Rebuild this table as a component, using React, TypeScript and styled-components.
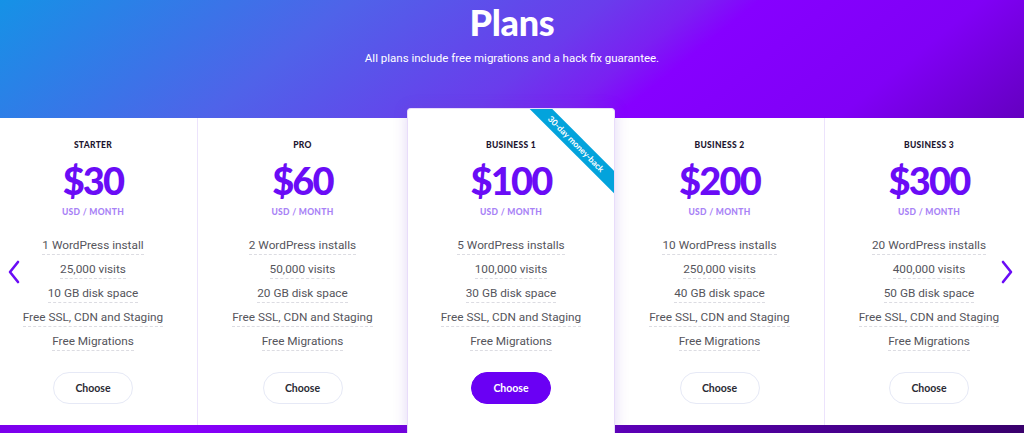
import React from "react";
import styled, { createGlobalStyle } from "styled-components";

const GlobalStyle = createGlobalStyle`
  html, body { margin: 0; padding: 0; background: #ffffff; overflow: hidden; }
  body { font-family: "Roboto", "Liberation Sans", sans-serif; }
  * { box-sizing: border-box; }
`;

const Page = styled.div`
  width: 1024px;
  height: 433px;
  position: relative;
  overflow: hidden;
  background: #ffffff;
`;

const Hero = styled.header`
  height: 118px;
  background: linear-gradient(141deg, #1592e6 0%, #4f63e9 30%, #6a3cec 52%, #7a20f2 60%, #8600ff 65%, #8000f6 84%, #6400c0 100%);
  display: flex;
  flex-direction: column;
  align-items: center;
  color: #ffffff;
`;

const Title = styled.h1`
  margin: 2px 0 0;
  font-family: "Lato", sans-serif;
  font-weight: 900;
  font-size: 36px;
  line-height: 40px;
  letter-spacing: -0.3px;
`;

const Subtitle = styled.p`
  margin: 8px 0 0;
  font-family: "Roboto", sans-serif;
  font-size: 11.5px;
  line-height: 16px;
  font-weight: 400;
`;

const Row = styled.section`
  position: relative;
  z-index: 1;
  margin-top: -10px;
  margin-left: -11px;
  width: 1044px;
  height: 325px;
  display: flex;
  align-items: flex-start;
  background: linear-gradient(90deg, #7a00ea 0%, #8a00ff 16%, #6d00d6 45%, #5000a0 72%, #38006a 100%) bottom / 100% 8px no-repeat;
`;

const Column = styled.div<{ $featured?: boolean; $divider?: "left" | "right" }>`
  flex: 0 0 ${(p) => (p.$featured ? 208 : 209)}px;
  margin-top: ${(p) => (p.$featured ? 0 : 10)}px;
  height: ${(p) => (p.$featured ? 325 : 307)}px;
  padding-top: 20px;
  display: flex;
  flex-direction: column;
  align-items: center;
  background: #ffffff;
  position: relative;
  overflow: hidden;
  ${(p) =>
    p.$featured
      ? `
    z-index: 2;
    padding-top: 29px;
    border: 1px solid #e8dcfa;
    border-bottom: none;
    border-radius: 4px 4px 0 0;
    box-shadow: 0 0 14px rgba(120, 70, 210, 0.22);
  `
      : ""}
  ${(p) => (p.$divider === "right" ? "border-right: 1px solid #ece3fc;" : "")}
  ${(p) => (p.$divider === "left" ? "border-left: 1px solid #ece3fc;" : "")}
`;

const PlanName = styled.div`
  font-family: "Lato", sans-serif;
  font-weight: 900;
  font-size: 8.5px;
  line-height: 14px;
  letter-spacing: 0.3px;
  color: #1d1530;
  text-transform: uppercase;
`;

const Price = styled.div`
  margin-top: 8px;
  font-family: "Lato", sans-serif;
  font-weight: 900;
  font-size: 38px;
  line-height: 40px;
  letter-spacing: -1.8px;
  color: #6a0cf6;
`;

const Period = styled.div`
  margin-top: 5px;
  font-family: "Lato", sans-serif;
  font-weight: 900;
  font-size: 8.5px;
  line-height: 14px;
  letter-spacing: 0.3px;
  color: #a882f6;
  text-transform: uppercase;
`;

const Features = styled.ul`
  list-style: none;
  margin: 15px 0 0;
  padding: 0;
  display: flex;
  flex-direction: column;
  align-items: center;
`;

const Feature = styled.li`
  height: 24px;
  display: flex;
  align-items: center;
`;

const FeatureText = styled.span`
  font-family: "Roboto", sans-serif;
  font-size: 11.8px;
  line-height: 16px;
  color: #55555c;
  border-bottom: 1px dashed #dcdce2;
  padding-bottom: 1px;
`;

const Button = styled.button<{ $primary?: boolean }>`
  margin-top: 18px;
  width: 80px;
  height: 32px;
  border-radius: 16px;
  border: 1px solid ${(p) => (p.$primary ? "#6a00f4" : "#e6e9f6")};
  background: ${(p) => (p.$primary ? "#6a00f4" : "#ffffff")};
  color: ${(p) => (p.$primary ? "#ffffff" : "#2a2a33")};
  font-family: "Lato", sans-serif;
  font-weight: 700;
  font-size: 10.5px;
  cursor: pointer;
`;

const Ribbon = styled.div`
  position: absolute;
  width: 160px;
  height: 16px;
  left: 88px;
  top: 27px;
  transform: rotate(45deg);
  background: #03a3dc;
  color: #ffffff;
  font-family: "Lato", sans-serif;
  font-weight: 700;
  font-size: 8.5px;
  line-height: 16px;
  text-align: center;
`;

const Arrow = styled.button<{ $side: "left" | "right" }>`
  position: absolute;
  top: 258px;
  ${(p) => (p.$side === "left" ? "left: 5px;" : "right: 8px;")}
  z-index: 5;
  width: 18px;
  height: 28px;
  padding: 0;
  border: none;
  background: transparent;
  display: flex;
  align-items: center;
  justify-content: center;
`;

type Plan = {
  name: string;
  price: string;
  features: string[];
  featured?: boolean;
  divider?: "left" | "right";
};

const plans: Plan[] = [
  {
    name: "Starter",
    price: "$30",
    divider: "right",
    features: ["1 WordPress install", "25,000 visits", "10 GB disk space", "Free SSL, CDN and Staging", "Free Migrations"],
  },
  {
    name: "Pro",
    price: "$60",
    features: ["2 WordPress installs", "50,000 visits", "20 GB disk space", "Free SSL, CDN and Staging", "Free Migrations"],
  },
  {
    name: "Business 1",
    price: "$100",
    featured: true,
    features: ["5 WordPress installs", "100,000 visits", "30 GB disk space", "Free SSL, CDN and Staging", "Free Migrations"],
  },
  {
    name: "Business 2",
    price: "$200",
    features: ["10 WordPress installs", "250,000 visits", "40 GB disk space", "Free SSL, CDN and Staging", "Free Migrations"],
  },
  {
    name: "Business 3",
    price: "$300",
    divider: "left",
    features: ["20 WordPress installs", "400,000 visits", "50 GB disk space", "Free SSL, CDN and Staging", "Free Migrations"],
  },
];

const Chevron = ({ dir }: { dir: "left" | "right" }) => (
  <svg width="14" height="24" viewBox="0 0 14 24" fill="none">
    <polyline
      points={dir === "left" ? "11,2 3,12 11,22" : "3,2 11,12 3,22"}
      stroke="#6a0cf6"
      strokeWidth="2.6"
      strokeLinecap="round"
      strokeLinejoin="round"
    />
  </svg>
);

export default function App() {
  return (
    <>
      <GlobalStyle />
      <Page>
        <Hero>
          <Title>Plans</Title>
          <Subtitle>All plans include free migrations and a hack fix guarantee.</Subtitle>
        </Hero>
        <Row>
          {plans.map((p) => (
            <Column key={p.name} $featured={p.featured} $divider={p.divider}>
              {p.featured && <Ribbon>30-day money-back</Ribbon>}
              <PlanName>{p.name}</PlanName>
              <Price>{p.price}</Price>
              <Period>USD / Month</Period>
              <Features>
                {p.features.map((f) => (
                  <Feature key={f}>
                    <FeatureText>{f}</FeatureText>
                  </Feature>
                ))}
              </Features>
              <Button $primary={p.featured}>Choose</Button>
            </Column>
          ))}
        </Row>
        <Arrow $side="left" aria-label="Previous">
          <Chevron dir="left" />
        </Arrow>
        <Arrow $side="right" aria-label="Next">
          <Chevron dir="right" />
        </Arrow>
      </Page>
    </>
  );
}
